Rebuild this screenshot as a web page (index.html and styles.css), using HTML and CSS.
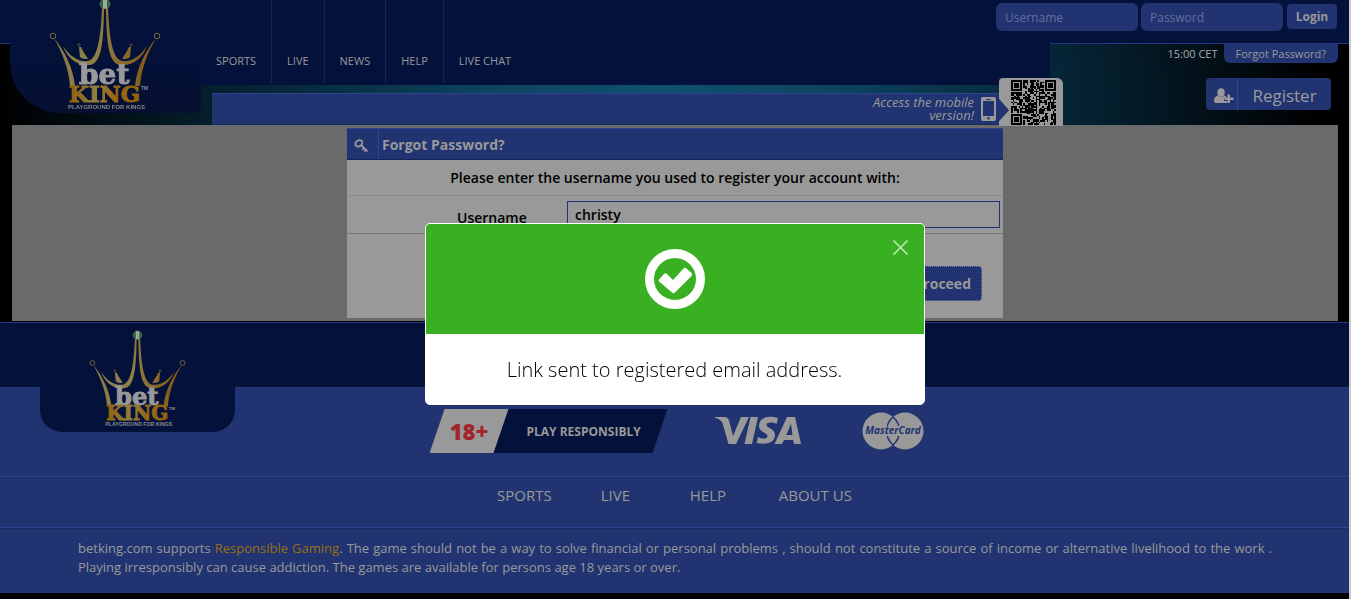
FILE: index.html
```html
<!DOCTYPE html>
<html lang="en">
<head>
<meta charset="utf-8">
<title>betKING - Forgot Password</title>
<link rel="stylesheet" href="styles.css">
</head>
<body>
<svg class="defs" width="0" height="0" aria-hidden="true">
  <defs>
    <linearGradient id="gold" x1="50" x2="160" y1="0" y2="0" gradientUnits="userSpaceOnUse">
      <stop offset="0" stop-color="#8a7a45"/><stop offset=".4" stop-color="#8f8048"/><stop offset=".65" stop-color="#8a6c2c"/><stop offset="1" stop-color="#84530e"/>
    </linearGradient>
    <linearGradient id="goldText" x1="69" x2="142" y1="0" y2="0" gradientUnits="userSpaceOnUse">
      <stop offset="0" stop-color="#94610a"/><stop offset=".38" stop-color="#8f8040"/><stop offset=".6" stop-color="#9a6a12"/><stop offset="1" stop-color="#93600c"/>
    </linearGradient>
    <symbol id="brand" viewBox="48 -2 114 114">
      <g fill="url(#gold)">
        <path d="M54 38C65 52 73 67 75 86H70C69 69 62 52 54 38ZM63 46C70 57 79 62 88 61C99 59 101 30 102 8H104C103.500 40 102 65 89 65C76 66 67 57 63 46ZM79 47L81 47C83 52 86 55 88 59C85 59 82 59 80 57Z"/>
        <path d="M156 38C145 52 137 67 135 86H140C141 69 148 52 156 38ZM147 46C140 57 131 62 122 61C111 59 109 30 108 8H106C106.500 40 108 65 121 65C134 66 143 57 147 46ZM131 47L129 47C127 52 124 55 122 59C125 59 128 59 130 57Z"/>
      </g>
      <g fill="none" stroke="#80683a"><circle cx="53" cy="36" r="2.800"/><circle cx="157" cy="36" r="2.800"/><circle cx="79" cy="45" r="1.200" stroke-width=".6"/><circle cx="131" cy="45" r="1.200" stroke-width=".6"/></g>
      <circle cx="105" cy="4" r="4.800" fill="#0b7040" stroke="#80683a"/>
      <path d="M103-.5h4v9h-4z" fill="#a0a5a0"/>
      <text class="brand-bet" x="79" y="84">bet</text>
      <text class="brand-king" x="69" y="102" fill="url(#goldText)">KING</text>
      <text class="brand-tm" x="141" y="90">TM</text>
      <text class="brand-tag" x="68" y="109">PLAYGROUND FOR KINGS</text>
    </symbol>
  </defs>
</svg>
<div class="page">
  <header class="header">
    <div class="topbar"></div>
    <nav class="nav">
      <a href="#">SPORTS</a><a href="#">LIVE</a><a href="#">NEWS</a><a href="#">HELP</a><a href="#">LIVE CHAT</a>
    </nav>
    <a class="logo" href="#" aria-label="betKING"><svg width="114" height="114"><use href="#brand"/></svg></a>
    <form class="login">
      <input type="text" placeholder="Username" aria-label="Username">
      <input type="password" placeholder="Password" aria-label="Password">
      <button type="button">Login</button>
    </form>
    <div class="mobile">
      <a href="#">Access the mobile<br>version!</a>
      <svg class="phone" width="15" height="24" viewBox="0 0 15 24"><path fill="#999" fill-rule="evenodd" d="M2 0h11a2 2 0 0 1 2 2v20a2 2 0 0 1-2 2H2a2 2 0 0 1-2-2V2a2 2 0 0 1 2-2zm0 4v15h11V4zM5 2v1h5V2zM7.500 20a1.300 1.300 0 1 0 0 2.600 1.300 1.300 0 0 0 0-2.600z"/></svg>
      <div class="qr"><svg id="qr" width="45" height="45" viewBox="0 0 29 29" shape-rendering="crispEdges"></svg></div>
    </div>
    <div class="account">
      <div class="account-top"><span class="clock">15:00 CET</span><a class="forgot" href="#">Forgot Password?</a></div>
      <a class="register" href="#">
        <span class="register-icon"><svg width="20" height="16" viewBox="0 0 20 16"><g fill="#999"><ellipse cx="7" cy="4.500" rx="3.700" ry="4.300"/><path d="M0 12.500C0 9.500 2 8 4 7.600C6 9.400 8.500 9.400 10.200 7.600L12 8.500V10H10V13H13V15H2C.8 15 0 14 0 12.500Z"/><path d="M13.500 6.500h2.500v3h3.500v2.500H16v3h-2.500v-3h-3V9.500h3z"/></g></svg></span>
        <span class="register-text">Register</span>
      </a>
    </div>
  </header>

  <main class="main">
    <form class="panel">
      <div class="panel-head">
        <span class="panel-icon"><svg width="15" height="14" viewBox="0 0 15 14"><g fill="none" stroke="#999" stroke-width="1.800"><ellipse cx="4.800" cy="4.300" rx="3.800" ry="2.900" transform="rotate(-35 4.800 4.300)"/><path d="M7 6L13.500 12.300M10 9l-1.800 2M12.300 10.500l-1.800 2"/></g></svg></span>
        <h1>Forgot Password?</h1>
      </div>
      <p class="hint">Please enter the username you used to register your account with:</p>
      <div class="field">
        <label for="user">Username</label>
        <input id="user" type="text" value="christy">
      </div>
      <div class="actions"><button type="button">Proceed</button></div>
    </form>
  </main>

  <footer class="footer">
    <div class="footer-top"></div>
    <div class="footer-brand"><svg width="99" height="99"><use href="#brand"/></svg></div>
    <div class="badges">
      <div class="responsible"><span class="age">18+</span><span class="play">PLAY RESPONSIBLY</span></div>
      <svg class="visa" width="86" height="32" viewBox="0 0 86 32" role="img" aria-label="VISA"><g fill="#999"><path d="M0 1H9C12 1 13.500 2.500 14.200 5L18 20L26 1H34L21 28H13.500L7.500 7C6 4 3 2.500 0 2Z"/><path d="M35.500 1H43L37 28H29.500Z"/><path d="M63 2L61.500 8C58 6 51.500 6 51.500 9C51.500 12 60 12.500 60 19C60 27 51 29 41.500 27L43 21C48 23.500 52.500 23 52.500 20C52.500 17 44 16 44 10C44 1 54 -1 63 2Z"/><path fill-rule="evenodd" d="M72 1H80L86 28H79L78 24H69L67 28H59.500ZM76 8L71.200 19H77.500Z"/></g></svg>
      <svg class="mastercard" width="62" height="38" viewBox="0 0 62 38" role="img" aria-label="MasterCard"><circle cx="19" cy="19" r="18.500" fill="#999"/><circle cx="43" cy="19" r="18.500" fill="#999"/><path d="M31 5A18.500 18.500 0 0 1 31 33A18.500 18.500 0 0 1 31 5Z" fill="none" stroke="#213471" stroke-width="1.500"/><path d="M3 14H59V24H3Z" fill="#999"/><text x="31" y="22" class="mc-text">MasterCard</text></svg>
    </div>
    <nav class="footer-nav"><a href="#">SPORTS</a><a href="#">LIVE</a><a href="#">HELP</a><a href="#">ABOUT US</a></nav>
    <p class="legal">betking.com supports <a href="#">Responsible Gaming</a>. The game should not be a way to solve financial or personal problems , should not constitute a source of income or alternative livelihood to the work . Playing irresponsibly can cause addiction. The games are available for persons age 18 years or over.</p>
  </footer>
</div>

<div class="overlay">
  <div class="modal" role="dialog" aria-modal="true" aria-labelledby="msg">
    <div class="modal-head">
      <svg width="62" height="62" viewBox="0 0 62 62"><circle cx="31" cy="31" r="25.500" fill="none" stroke="#fff" stroke-width="9"/><path d="M15 31.500L20 26Q21.500 24.500 23 26L29 32L39.500 20.500Q41 19 42.500 20.500L47.500 25Q49 26.500 47.500 28L31 44.500Q29.500 46 28 44.500L15 33.500Q14 32.500 15 31.500Z" fill="#fff"/></svg>
      <button class="close" type="button" aria-label="Close"><svg width="15" height="15" viewBox="0 0 15 15"><path d="M.5.5l14 14M14.500.5l-14 14" stroke="#c9e8c2" stroke-width="1.500"/></svg></button>
    </div>
    <p id="msg">Link sent to registered email address.</p>
  </div>
</div>
<script src="qr.js"></script>
</body>
</html>
```
FILE: styles.css
```css
* { box-sizing: border-box; }
body { margin: 0; background: #000; color: #999; font-family: "Open Sans", "Noto Sans", sans-serif; font-size: 13px; }
a { color: inherit; text-decoration: none; }
svg { display: block; flex: none; }
h1, p { margin: 0; }
button, input { font: inherit; color: inherit; }
.defs { position: absolute; }
.page { min-height: 100vh; border-right: 2px solid #cdcdcd; background: #000; }

.brand-bet { font: bold 28px "DejaVu Serif", serif; fill: #999; stroke: #999; stroke-width: 1px; }
.brand-king { font: bold 23px "DejaVu Serif", serif; stroke: url(#goldText); stroke-width: 1px; }
.brand-tm { font: bold 5px "Liberation Sans", sans-serif; fill: #8a8a8a; }
.brand-tag { font: bold 6px "Liberation Sans", sans-serif; fill: #8a8a8a; }

.header { display: grid; grid-template-columns: 10px 202px 1fr 299px; grid-template-rows: 44px 41px 8px 32px;
  background: radial-gradient(ellipse 660px 400px at 660px 100px, #10506f, #0d4560 25%, #062638 60%, #000 100%); }
.topbar { grid-area: 1 / 1 / 2 / -1; background: #04123b; border-bottom: 1px solid #213a80; }
.nav { grid-area: 1 / 2 / 3 / 4; display: flex; margin-left: 100px; padding: 0 0 2px 91px; background: #04123b; font-size: 11px; line-height: 15px; }
.nav a { padding: 53px 15px 0; border-right: 1px solid #18254b; }
.nav a:last-child { border: 0; }
.logo { grid-area: 1 / 2 / 5 / 3; z-index: 1; width: 191px; height: 113px; padding-left: 38px; overflow: hidden;
  background: linear-gradient(#04123b 40%, #050f30); border-radius: 0 0 6px 50px; }
.logo svg { margin-top: -2px; }
.login { grid-area: 1 / 3 / 2 / -1; justify-self: end; align-self: start; display: flex; gap: 3px; padding: 3px 12px 0 0; }
.login input { width: 142px; height: 28px; padding: 0 9px; border: 0; border-radius: 6px; background: #213471; font-size: 12px; }
.login input::placeholder { color: #64709a; }
.login button { width: 50px; height: 25px; margin: 1px 0 0 1px; padding: 0; border: 0; border-radius: 4px; background: #213471; font-size: 12px; font-weight: 700; }
.mobile { grid-area: 4 / 3 / 5 / 4; position: relative; display: flex; justify-content: flex-end; align-items: center; gap: 7px; padding-right: 54px;
  background: #213471; border-top: 1px solid #2a4591; border-bottom: 1px solid #182a60; font-size: 13px; font-style: italic; line-height: 13px; text-align: right; }
.qr { position: absolute; right: -13px; bottom: -2px; width: 64px; height: 48px; padding: 2px 0 0 12px; background: #999; border-radius: 4px 6px 0 0;
  clip-path: polygon(0 0, 100% 0, 100% 100%, 0 100%, 0 90%, 10px 67%, 0 43%); }
.account { grid-area: 2 / 4 / 5 / 5; display: flex; flex-direction: column; align-items: flex-end; gap: 15px; }
.account-top { display: flex; gap: 6px; padding-right: 11px; font-size: 11px; line-height: 19px; }
.forgot { padding: 0 12px; border-radius: 0 0 6px 6px; background: #213471; }
.clock { color: #aaa; }
.register { display: flex; width: 125px; height: 32px; margin-right: 18px; border-radius: 4px; background: #213471; font-size: 17px; line-height: 35px; }
.register-icon { width: 32px; padding: 10px 0 0 8px; border-right: 1px solid #30479b; }
.register-text { flex: 1; text-align: center; }

.main { margin: 0 11px 0 12px; padding: 3px 0; background: #696a6b; }
.panel { width: 656px; margin: 0 auto; background: #999; color: #000; font-weight: 600; font-size: 14px; }
.panel-head { display: flex; height: 32px; background: #213471; border-top: 1px solid #2a4591; border-bottom: 1px solid #14245a; color: #999; }
.panel-icon { width: 32px; padding: 10px 0 0 7px; border-right: 1px solid #2f479b; }
.panel h1 { padding-left: 3px; font-size: 14px; line-height: 31px; }
.hint { height: 36px; border-bottom: 1px solid #8a8a8a; line-height: 35px; text-align: center; }
.field { display: flex; align-items: flex-start; height: 38px; padding: 5px 3px 0 110px; border-bottom: 1px solid #777; }
.field label { width: 110px; line-height: 33px; }
.field input { flex: 1; height: 27px; padding: 0 7px; border: 1px solid #213471; background: transparent; }
.actions { display: flex; justify-content: flex-end; align-items: flex-start; height: 84px; padding: 32px 21px 0 0; }
.actions button { height: 35px; padding: 0 10px; border: 1px dotted #7a86ad; border-radius: 4px; background: #213471; color: #999; font-weight: 700; }

.footer { display: grid; grid-template-columns: 40px 195px 1fr; grid-template-rows: 65px 44px 45px auto auto; margin-top: 1px;
  background: #213471; border-top: 1px solid #213a80; }
.footer-top { grid-area: 1 / 1 / 2 / -1; background: #04123b; border-bottom: 1px solid #213a80; }
.footer-brand { grid-area: 1 / 2 / 3 / 3; padding: 7px 0 0 48px; border-radius: 0 0 22px 22px; background: #04123b; }
.badges { grid-area: 2 / 1 / 4 / -1; display: flex; justify-content: center; align-items: flex-start; padding-top: 21px; padding-left: 4px; border-bottom: 1px solid #2b4595; }
.responsible { display: flex; width: 238px; height: 44px; line-height: 45px; background: #04123b; clip-path: polygon(15px 0, 100% 0, 223px 100%, 0 100%); font-weight: 700; }
.age { width: 79px; background: #999; clip-path: polygon(0 0, 100% 0, 64px 100%, 0 100%); color: #a1262c; font-size: 22px; font-weight: 800; text-align: center; }
.play { flex: 1; padding-left: 18px; font-size: 12px; }
.visa { margin: 7px 0 0 47px; }
.mastercard { margin: 3px 0 0 61px; }
.mc-text { font: italic bold 10px "Open Sans", sans-serif; fill: #213471; text-anchor: middle; }
.footer-nav { grid-area: 4 / 1 / 5 / -1; display: flex; justify-content: center; height: 51px; border-top: 1px solid #182a60; border-bottom: 1px solid #2b4595; font-size: 15px; line-height: 34px; }
.footer-nav a { min-width: 89px; padding-right: 49px; }
.footer-nav a:last-child { min-width: 0; padding-right: 0; }
.legal { grid-area: 5 / 1 / 6 / -1; padding: 10px 77px 16px 78px; border-top: 1px solid #182a60; line-height: 19px; text-align: justify; }
.legal a { color: #96700f; }

.overlay { position: fixed; inset: 0 2px 0 0; display: flex; justify-content: center; align-items: flex-start; padding-top: 223px; }
.modal { width: 500px; border: 1px solid #fff; border-radius: 5px; background: #fff; overflow: hidden; }
.modal-head { position: relative; display: flex; justify-content: center; height: 110px; padding-top: 24px; background: #39b021; }
.close { position: absolute; top: 16px; right: 16px; padding: 0; border: 0; background: none; }
.modal p { padding: 22px 0 20px; color: #000; font-size: 20px; font-weight: 300; line-height: 28px; text-align: center; }
```
FILE: qr.js
```javascript
(function () {
  var n = 29, seed = 29, d = "";
  function finder(x, y) {
    var r = Math.max(Math.abs(x - 3), Math.abs(y - 3));
    return r === 3 || r < 2;
  }
  for (var y = 0; y < n; y++) {
    for (var x = 0; x < n; x++) {
      seed = (seed * 1103515245 + 12345) % 2147483648;
      var left = x < 8, right = x > n - 9, top = y < 8, bottom = y > n - 9, on;
      if ((left && top) || (right && top) || (left && bottom)) {
        on = finder(right ? n - 1 - x : x, bottom ? n - 1 - y : y);
      } else {
        on = seed / 2147483648 > 0.46;
      }
      if (on) d += "M" + x + " " + y + "h1v1h-1z";
    }
  }
  document.getElementById("qr").innerHTML = '<path d="' + d + '"/>';
})();
```
